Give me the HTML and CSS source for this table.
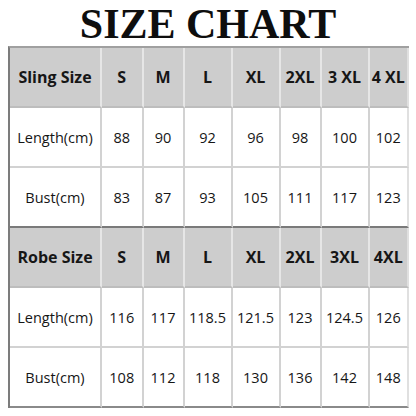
FILE: index.html
```html
<!DOCTYPE html>
<html>
<head>
<meta charset="utf-8">
<link rel="stylesheet" href="styles.css">
</head>
<body>
<h1 class="title">SIZE CHART</h1>
<div class="chart">
  <div class="cell head first">Sling Size</div>
  <div class="cell head">S</div>
  <div class="cell head">M</div>
  <div class="cell head">L</div>
  <div class="cell head">XL</div>
  <div class="cell head">2XL</div>
  <div class="cell head">3 XL</div>
  <div class="cell head last">4 XL</div>

  <div class="cell first">Length(cm)</div>
  <div class="cell">88</div>
  <div class="cell">90</div>
  <div class="cell">92</div>
  <div class="cell">96</div>
  <div class="cell">98</div>
  <div class="cell">100</div>
  <div class="cell last">102</div>

  <div class="cell first sep">Bust(cm)</div>
  <div class="cell sep">83</div>
  <div class="cell sep">87</div>
  <div class="cell sep">93</div>
  <div class="cell sep">105</div>
  <div class="cell sep">111</div>
  <div class="cell sep">117</div>
  <div class="cell last sep">123</div>

  <div class="cell head first">Robe Size</div>
  <div class="cell head">S</div>
  <div class="cell head">M</div>
  <div class="cell head">L</div>
  <div class="cell head">XL</div>
  <div class="cell head">2XL</div>
  <div class="cell head">3XL</div>
  <div class="cell head last">4XL</div>

  <div class="cell first">Length(cm)</div>
  <div class="cell">116</div>
  <div class="cell">117</div>
  <div class="cell">118.5</div>
  <div class="cell">121.5</div>
  <div class="cell">123</div>
  <div class="cell">124.5</div>
  <div class="cell last">126</div>

  <div class="cell first end">Bust(cm)</div>
  <div class="cell end">108</div>
  <div class="cell end">112</div>
  <div class="cell end">118</div>
  <div class="cell end">130</div>
  <div class="cell end">136</div>
  <div class="cell end">142</div>
  <div class="cell last end">148</div>
</div>
</body>
</html>
```
FILE: styles.css
```css
html, body {
  margin: 0;
  padding: 0;
  background: #ffffff;
}

.title {
  margin: 0;
  height: 46px;
  padding-top: 2px;
  box-sizing: border-box;
  line-height: 44px;
  text-align: center;
  font-family: "Liberation Serif", "Times New Roman", serif;
  font-weight: bold;
  font-size: 42px;
  color: #0e0e0e;
}

.chart {
  margin-left: 8px;
  width: 401px;
  display: grid;
  grid-template-columns: 92px 41.5px 41px 48px 48px 41px 48px 39.5px;
  grid-auto-rows: 60px;
  border-left: 2px solid #7c7c7c;
  border-top: 2px solid #a0a0a0;
  box-sizing: border-box;
  font-family: "Open Sans", "Noto Sans", sans-serif;
  color: #161616;
}

.cell {
  box-sizing: border-box;
  border-right: 2px solid #d2d2d2;
  border-bottom: 2px solid #d2d2d2;
  display: flex;
  align-items: center;
  justify-content: center;
  font-size: 14.5px;
  white-space: nowrap;
  background: #ffffff;
}

.cell.head {
  background: #cdcdcd;
  border-right-color: #e6e6e6;
  border-bottom-color: #bdbdbd;
  font-weight: bold;
  font-size: 16px;
}

.cell.last {
  border-right-color: #e0e0e0;
}

.cell.sep {
  border-bottom-color: #7a7a7a;
}

.cell.end {
  border-bottom-color: #8a8a8a;
}
```
